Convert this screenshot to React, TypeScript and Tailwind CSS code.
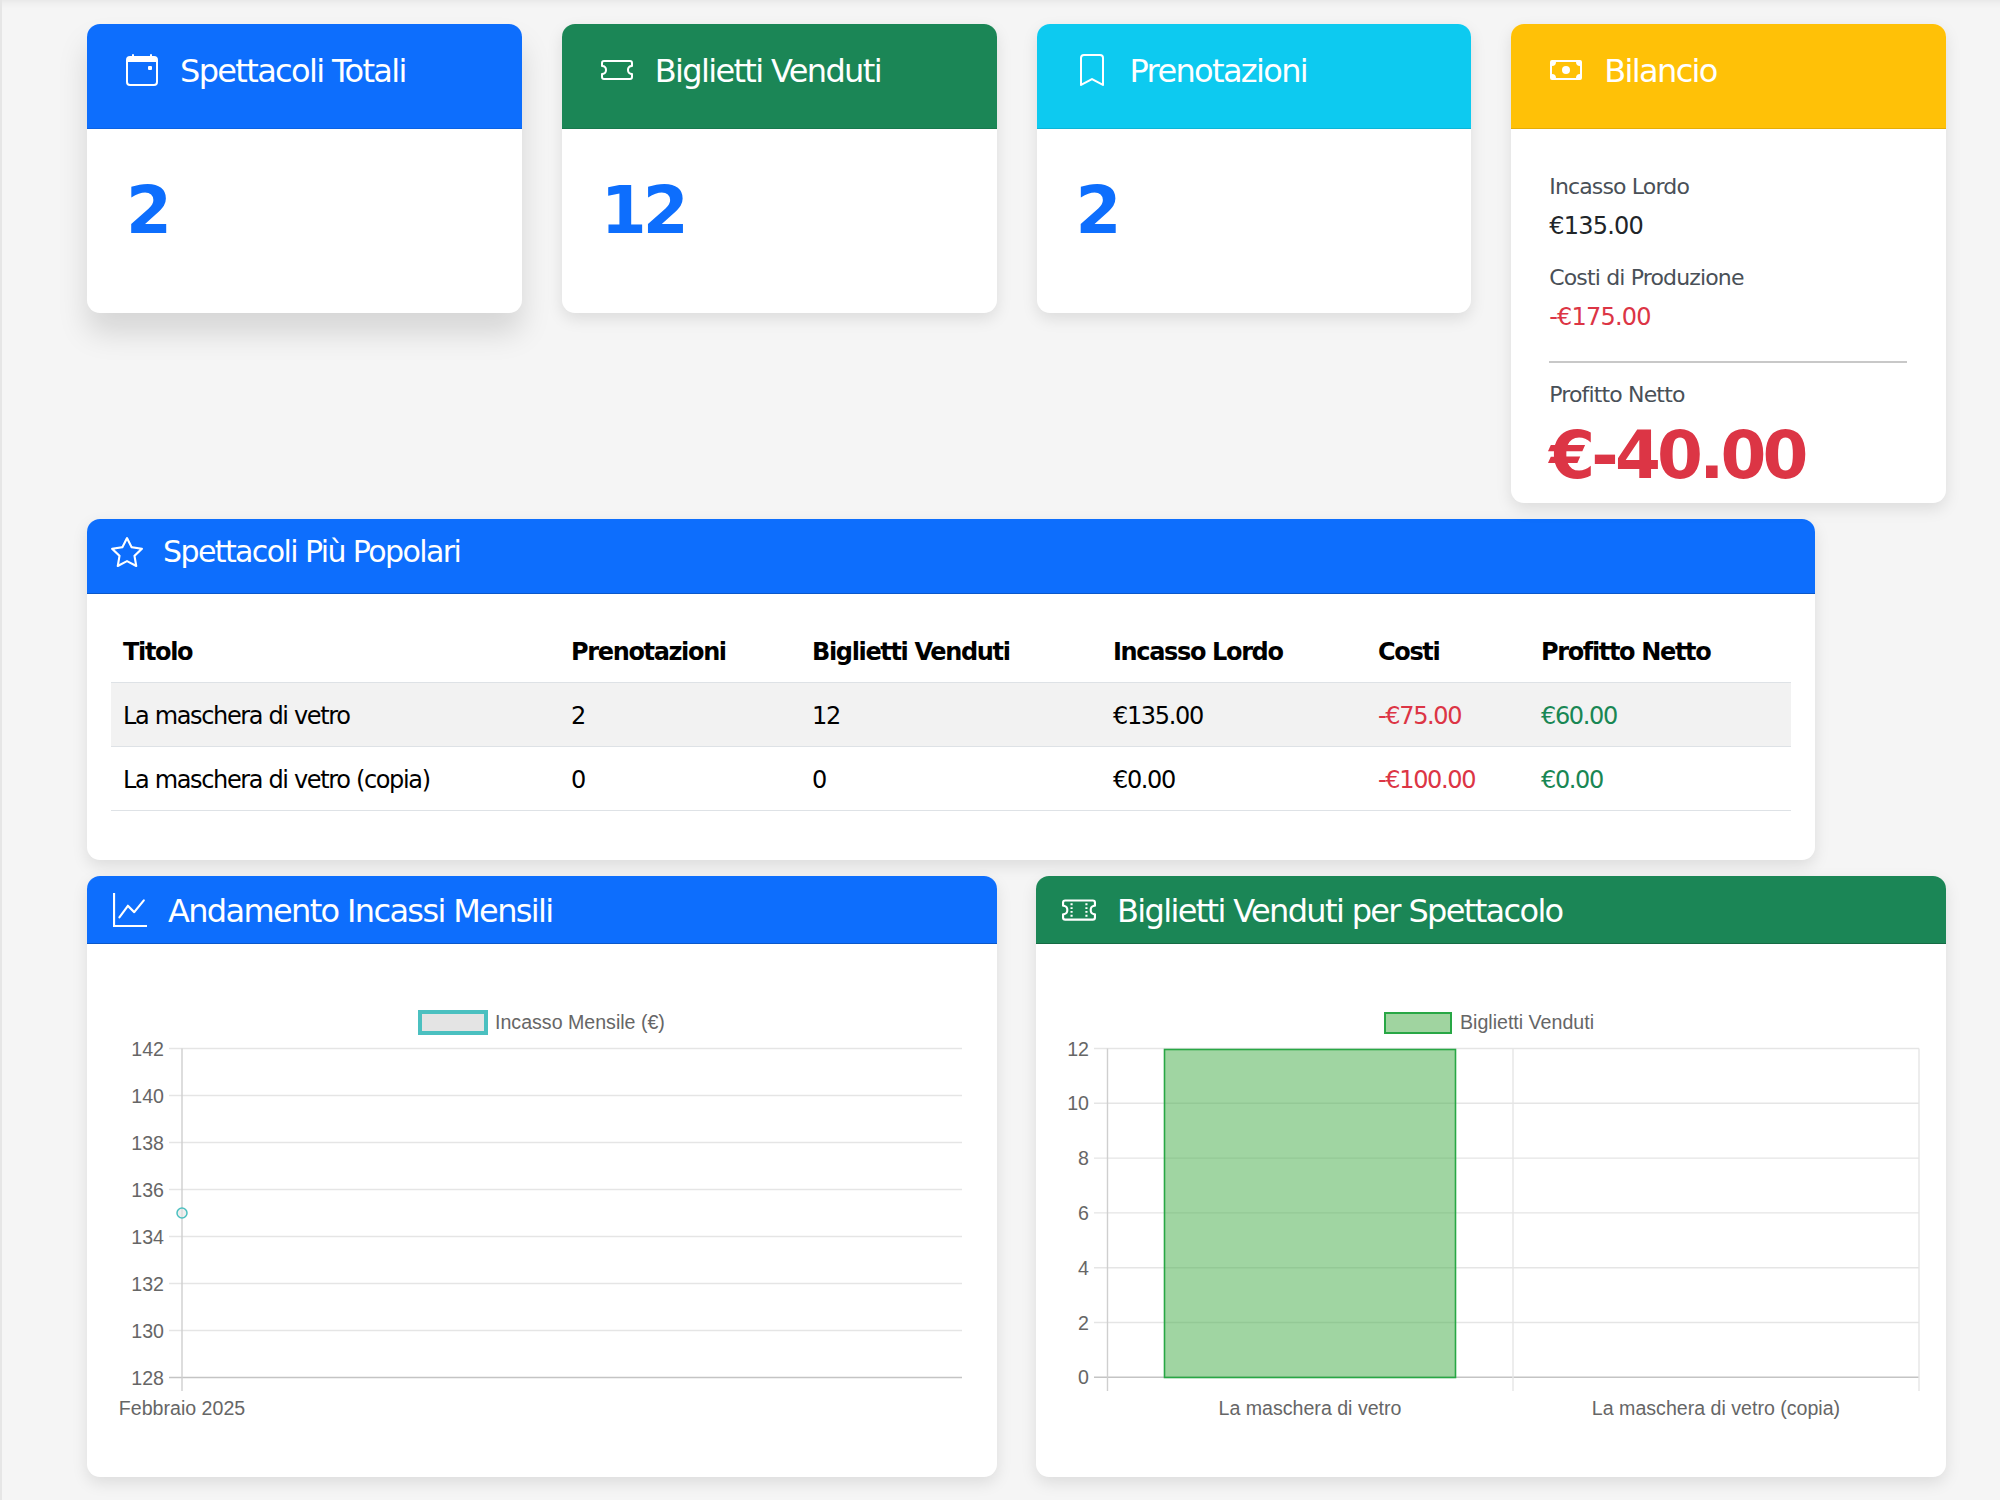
import type { ReactNode } from 'react'
import { BsBookmark, BsCalendarEvent, BsCash, BsGraphUp, BsStar, BsTicket, BsTicketPerforated } from 'react-icons/bs'

const chartFont = '"Liberation Sans", Arial, sans-serif'

function StatCard({ icon, title, head, shadow, children }: { icon: ReactNode; title: string; head: string; shadow: string; children: ReactNode }) {
  return (
    <div className={`overflow-hidden rounded-[13px] bg-white ${shadow}`}>
      <div className={`flex h-[105px] items-start border-b border-black/10 pl-[39px] pt-[30px] text-white ${head}`}>
        <span className="mr-[22px] flex h-[32px] w-[32px] items-center justify-center text-[32px]">{icon}</span>
        <h5 className="-mt-[1px] text-[32px] leading-[36px] tracking-[-1.65px]">{title}</h5>
      </div>
      {children}
    </div>
  )
}

function BigNumber({ value }: { value: string }) {
  return (
    <div className="h-[184px] pl-[39px] pt-[40px] text-[66px] font-bold leading-[84px] tracking-[-3.8px] text-[#0d6efd]">{value}</div>
  )
}

function Money({ label, value, red }: { label: string; value: string; red?: boolean }) {
  return (
    <div className="mb-[15px]">
      <div className="h-[40px] text-[22px] leading-[40px] tracking-[-0.85px] text-[#495057]">{label}</div>
      <div className={`h-[36px] pt-[1px] text-[24px] leading-[36px] tracking-[-0.8px] ${red ? 'text-[#dc3545]' : 'text-[#212529]'}`}>{value}</div>
    </div>
  )
}

const rows = [
  { titolo: 'La maschera di vetro', pren: '2', big: '12', lordo: '€135.00', costi: '-€75.00', netto: '€60.00' },
  { titolo: 'La maschera di vetro (copia)', pren: '0', big: '0', lordo: '€0.00', costi: '-€100.00', netto: '€0.00' },
]

function PopularTable() {
  return (
    <table className="w-full table-fixed border-collapse text-left text-[24px] tracking-[-1.35px] text-black">
      <colgroup>
        <col className="w-[448px]" />
        <col className="w-[241px]" />
        <col className="w-[301px]" />
        <col className="w-[265px]" />
        <col className="w-[163px]" />
        <col />
      </colgroup>
      <thead>
        <tr className="h-[62px] border-b border-[#dee2e6] font-bold">
          {['Titolo', 'Prenotazioni', 'Biglietti Venduti', 'Incasso Lordo', 'Costi', 'Profitto Netto'].map((h) => (
            <th key={h} className="px-[12px] pt-[3px] font-bold">{h}</th>
          ))}
        </tr>
      </thead>
      <tbody>
        {rows.map((r, i) => (
          <tr key={r.titolo} className={`h-[64px] border-b border-[#dee2e6] ${i === 0 ? 'bg-[#f2f2f2]' : ''}`}>
            <td className="px-[12px] pt-[3px]">{r.titolo}</td>
            <td className="px-[12px] pt-[3px]">{r.pren}</td>
            <td className="px-[12px] pt-[3px]">{r.big}</td>
            <td className="px-[12px] pt-[3px]">{r.lordo}</td>
            <td className="px-[12px] pt-[3px] text-[#dc3545]">{r.costi}</td>
            <td className="px-[12px] pt-[3px] text-[#198754]">{r.netto}</td>
          </tr>
        ))}
      </tbody>
    </table>
  )
}

function ChartCard({ icon, title, head, children }: { icon: ReactNode; title: string; head: string; children: ReactNode }) {
  return (
    <div className="overflow-hidden rounded-[13px] bg-white shadow-[0_6px_16px_rgba(0,0,0,0.1)]">
      <div className={`flex h-[68px] items-center border-b border-black/20 pl-[26px] text-white ${head}`}>
        <span className="mr-[21px] flex h-[36px] w-[34px] items-center justify-center text-[34px]">{icon}</span>
        <h5 className="pt-[2px] text-[32px] leading-[40px] tracking-[-1.65px]">{title}</h5>
      </div>
      {children}
    </div>
  )
}

// chart svgs use page coordinates in the viewBox so numbers can be read off the screenshot
function IncassiChart() {
  const ticks = [142, 140, 138, 136, 134, 132, 130, 128]
  return (
    <svg viewBox="87 944 910 533" className="block h-[533px] w-full" style={{ fontFamily: chartFont }}>
      <rect x="420" y="1012" width="66" height="21" fill="#e4e4e4" stroke="#4bc0c0" strokeWidth="4" />
      <text x="495" y="1029" fontSize="19.6" fill="#666">Incasso Mensile (€)</text>
      {ticks.map((t, i) => {
        const y = 1048.5 + i * 47
        return (
          <g key={t}>
            <line x1="169" x2="962" y1={y} y2={y} stroke={t === 128 ? '#c4c4c4' : '#e5e5e5'} strokeWidth="1.4" />
            <text x="164" y={y + 7} fontSize="19.6" fill="#666" textAnchor="end">{t}</text>
          </g>
        )
      })}
      <line x1="182" x2="182" y1="1048.5" y2="1391" stroke="#cfcfcf" strokeWidth="1.4" />
      <circle cx="182" cy="1213" r="5" fill="#e4e4e4" fillOpacity="0.6" stroke="#4bc0c0" strokeWidth="1.5" />
      <text x="182" y="1415" fontSize="19.6" fill="#666" textAnchor="middle">Febbraio 2025</text>
    </svg>
  )
}

function BigliettiChart() {
  const ticks = [12, 10, 8, 6, 4, 2, 0]
  return (
    <svg viewBox="1036 944 910 533" className="block h-[533px] w-full" style={{ fontFamily: chartFont }}>
      <rect x="1385" y="1013" width="66" height="20" fill="#a0d4a0" stroke="#28a745" strokeWidth="2" />
      <text x="1460" y="1029" fontSize="19.6" fill="#666">Biglietti Venduti</text>
      {ticks.map((t, i) => {
        const y = 1048.5 + i * 54.8
        return (
          <g key={t}>
            <line x1="1094" x2="1919" y1={y} y2={y} stroke={t === 0 ? '#c4c4c4' : '#e5e5e5'} strokeWidth="1.4" />
            <text x="1089" y={y + 7} fontSize="19.6" fill="#666" textAnchor="end">{t}</text>
          </g>
        )
      })}
      <line x1="1107.5" x2="1107.5" y1="1048.5" y2="1391" stroke="#cfcfcf" strokeWidth="1.4" />
      <line x1="1513" x2="1513" y1="1048.5" y2="1391" stroke="#e5e5e5" strokeWidth="1.4" />
      <line x1="1919" x2="1919" y1="1048.5" y2="1391" stroke="#e5e5e5" strokeWidth="1.4" />
      <rect x="1164.5" y="1049.5" width="291" height="328" fill="#4caf50" fillOpacity="0.53" stroke="#28a745" strokeWidth="1.6" />
      <text x="1310" y="1415" fontSize="19.6" fill="#666" textAnchor="middle">La maschera di vetro</text>
      <text x="1716" y="1415" fontSize="19.6" fill="#666" textAnchor="middle">La maschera di vetro (copia)</text>
    </svg>
  )
}

export default function App() {
  return (
    <div className="min-h-[1500px] bg-[#f5f5f5] pl-[87px] pr-[54px] pt-[24px] font-['DejaVu_Sans',sans-serif] shadow-[inset_2px_0_0_#e6e6e6,inset_0_10px_10px_-10px_rgba(0,0,0,0.1)]">
      <div className="grid grid-cols-4 items-start gap-x-[40px]">
        <StatCard icon={<BsCalendarEvent />} title="Spettacoli Totali" head="bg-[#0d6efd]" shadow="shadow-[0_20px_30px_rgba(0,0,0,0.13)]">
          <BigNumber value="2" />
        </StatCard>
        <StatCard icon={<BsTicket />} title="Biglietti Venduti" head="bg-[#1b8656]" shadow="shadow-[0_6px_16px_rgba(0,0,0,0.1)]">
          <BigNumber value="12" />
        </StatCard>
        <StatCard icon={<BsBookmark />} title="Prenotazioni" head="bg-[#0dcaf0]" shadow="shadow-[0_6px_16px_rgba(0,0,0,0.1)]">
          <BigNumber value="2" />
        </StatCard>
        <StatCard icon={<BsCash />} title="Bilancio" head="bg-[#ffc107]" shadow="shadow-[0_6px_16px_rgba(0,0,0,0.1)]">
          <div className="h-[374px] pl-[38px] pr-[39px] pt-[38px]">
            <Money label="Incasso Lordo" value="€135.00" />
            <Money label="Costi di Produzione" value="-€175.00" red />
            <div className="mt-[27px] border-t-2 border-[#c8c8c8]" />
            <div className="mt-[12px] h-[40px] text-[22px] leading-[40px] tracking-[-0.85px] text-[#495057]">Profitto Netto</div>
            <div className="pt-[1px] text-[66px] font-bold leading-[80px] tracking-[-3.8px] text-[#dc3545]">€-40.00</div>
          </div>
        </StatCard>
      </div>

      <div className="mt-[16px] w-[1728px] overflow-hidden rounded-[13px] bg-white shadow-[0_6px_16px_rgba(0,0,0,0.1)]">
        <div className="flex h-[75px] items-center border-b border-black/20 bg-[#0d6efd] pl-[24px] pb-[8px] text-white">
          <span className="mr-[20px] flex h-[32px] w-[32px] items-center justify-center text-[32px]"><BsStar /></span>
          <h5 className="text-[30px] leading-[36px] tracking-[-1.6px]">Spettacoli Più Popolari</h5>
        </div>
        <div className="h-[266px] px-[24px] pt-[26px]">
          <PopularTable />
        </div>
      </div>

      <div className="mt-[16px] grid grid-cols-2 gap-x-[39px]">
        <ChartCard icon={<BsGraphUp />} title="Andamento Incassi Mensili" head="bg-[#0d6efd]">
          <IncassiChart />
        </ChartCard>
        <ChartCard icon={<BsTicketPerforated />} title="Biglietti Venduti per Spettacolo" head="bg-[#1b8656]">
          <BigliettiChart />
        </ChartCard>
      </div>
    </div>
  )
}
